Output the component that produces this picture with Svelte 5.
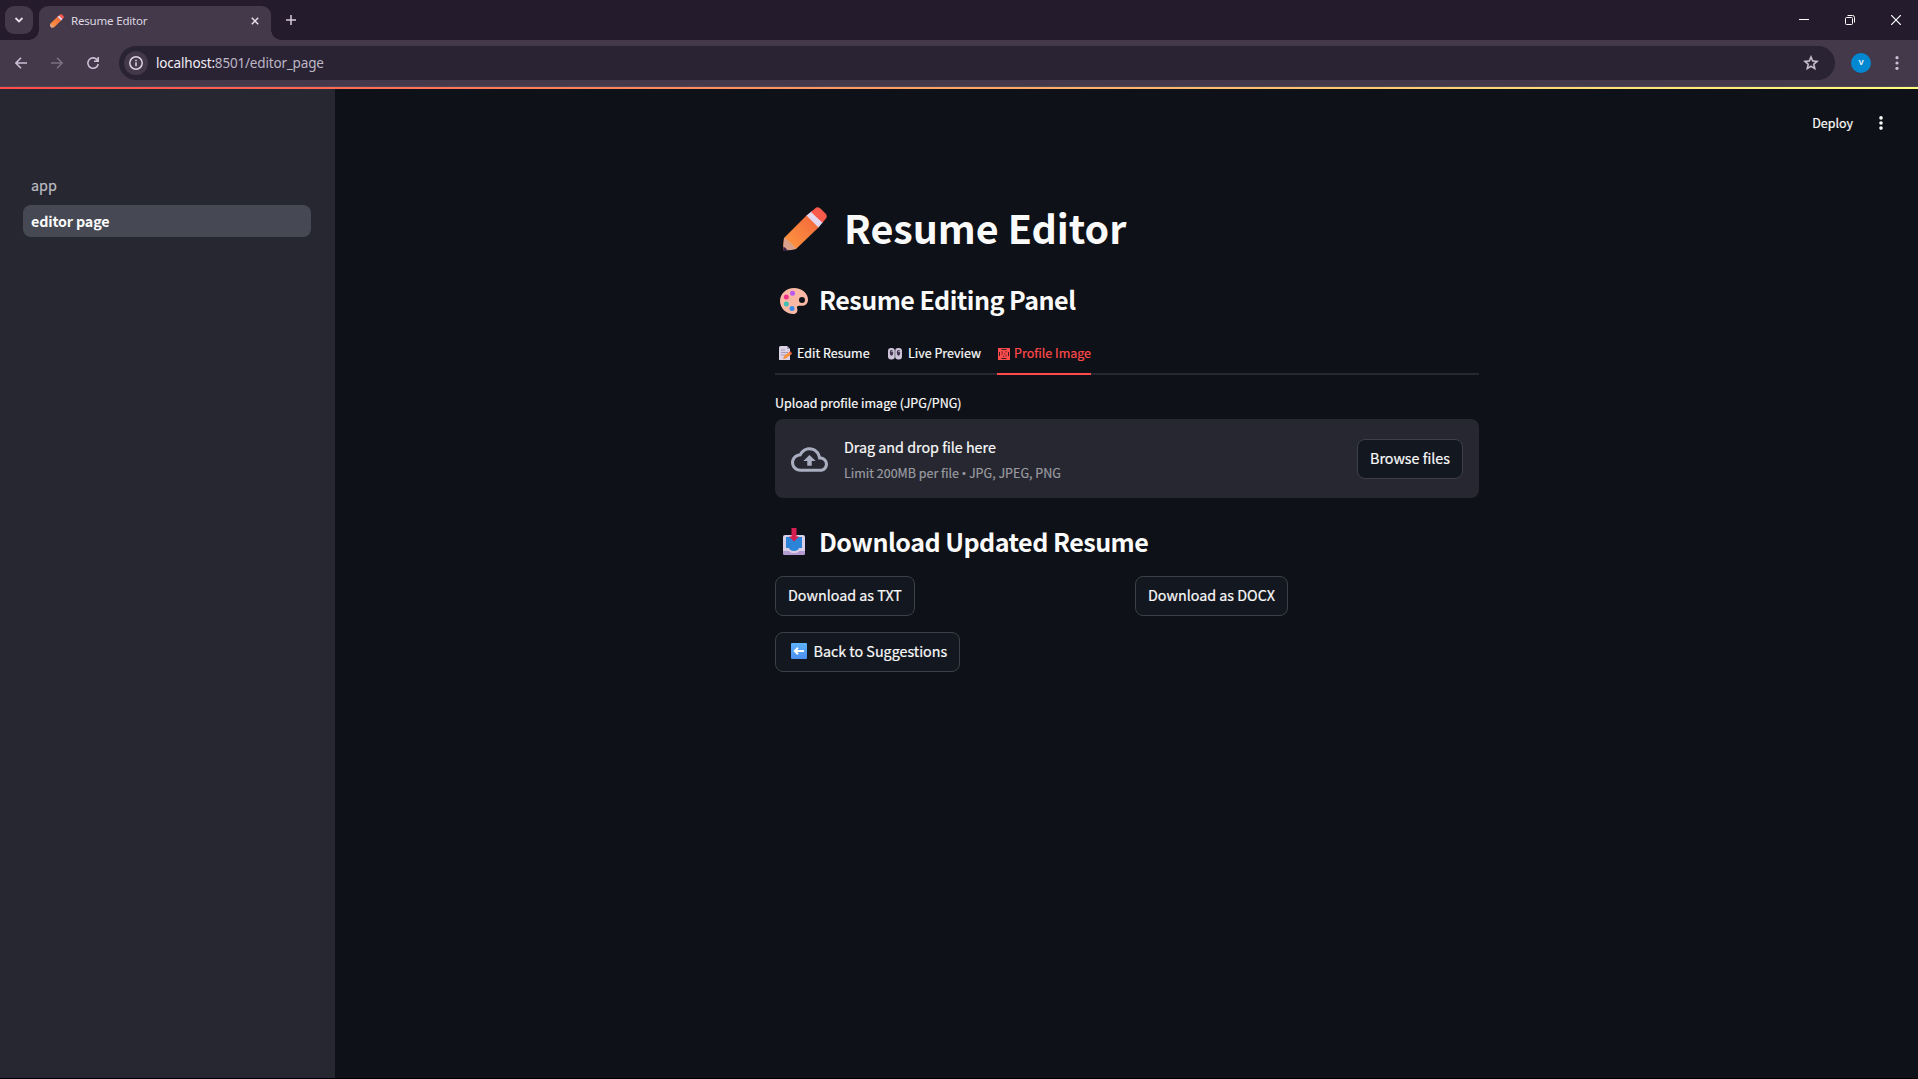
<script>
  const pages = [
    { name: 'app', active: false },
    { name: 'editor page', active: true }
  ];
</script>

{#snippet pencil(cls)}
  <svg class={cls} viewBox="0 0 44 44" aria-hidden="true">
    <defs>
      <linearGradient id="wood" x1="0" y1="1" x2="1" y2="0">
        <stop offset="0" stop-color="#ff9b42" />
        <stop offset="1" stop-color="#f2643a" />
      </linearGradient>
    </defs>
    <path d="M0 43 L1 31 L24 8 L36 20 L13 42 Z" fill="url(#wood)" />
    <path d="M0 43 L1 31 Q7 34 13 42 Q6 44 0 43 Z" fill="#d9a08c" />
    <path d="M0 44 L0.4 39.5 Q3 41 4.5 43.5 Z" fill="#3d1f45" />
    <path d="M23.5 8.5 L29 4 L40 15 L35.5 20.5 Z" fill="#e3d6ee" />
    <path d="M28 5 L32 1.5 Q35 -1 38 2 L42.500 6.500 Q45 9 42.500 12 L39.500 15.800 Z" fill="#fa5a4b" />
  </svg>
{/snippet}

<div class="window">
  <header class="tabstrip">
    <button class="tabsearch" aria-label="Search tabs">
      <svg width="10" height="6" viewBox="0 0 10 6"><path d="M1.500 1l3.500 3.500L8.500 1" fill="none" stroke="#e6dfea" stroke-width="1.800" /></svg>
    </button>
    <div class="tab">
      {@render pencil('favicon')}
      <span class="tabtitle">Resume Editor</span>
      <svg class="tabclose" viewBox="0 0 10 10"><path d="M1 1l8 8M9 1l-8 8" stroke="#e6dfea" stroke-width="1.900" /></svg>
    </div>
    <svg class="newtab" viewBox="0 0 10 10"><path d="M5 0v10M0 5h10" stroke="#d6cbdc" stroke-width="1.500" /></svg>
    <div class="winbtns">
      <svg width="10" height="10" viewBox="0 0 10 10"><path d="M0 4.500h10" stroke="#fff" stroke-width="1" /></svg>
      <svg width="10" height="10" viewBox="0 0 10 10" fill="none" stroke="#fff"><rect x=".5" y="2.500" width="7" height="7" rx="1" /><path d="M2.500 .5h5a2 2 0 0 1 2 2v5" /></svg>
      <svg width="10" height="10" viewBox="0 0 10 10"><path d="M0 0l10 10M10 0L0 10" stroke="#fff" stroke-width="1.200" /></svg>
    </div>
  </header>

  <div class="toolbar">
    <svg class="nav" viewBox="0 0 12 12" fill="none" stroke="#cdbfd6" stroke-width="1.600"><path d="M12 6H1M6 .700L.900 6 6 11.300" /></svg>
    <svg class="nav" viewBox="0 0 12 12" fill="none" stroke="#7b7083" stroke-width="1.600"><path d="M0 6h11M6 .700L11.100 6 6 11.300" /></svg>
    <svg class="nav" viewBox="0 0 12 12" fill="none" stroke="#cdbfd6" stroke-width="1.600"><path d="M10.600 3.500A5.200 5.200 0 1 0 11.200 7M11.200 0v4.200H7" /></svg>
    <div class="omnibox">
      <span class="info">
        <svg width="14" height="14" viewBox="0 0 14 14"><circle cx="7" cy="7" r="6.200" fill="none" stroke="#ded3e4" stroke-width="1.500" /><path d="M7 6.200v4M7 3.700v1.500" stroke="#ded3e4" stroke-width="1.500" /></svg>
      </span>
      <span class="url"><b>localhost:</b>8501/editor_page</span>
      <svg class="star" viewBox="0 0 24 24"><path fill="#cfc7d4" stroke="#cfc7d4" stroke-width=".5" d="M22 9.240l-7.190-.620L12 2 9.190 8.630 2 9.240l5.460 4.730L5.820 21 12 17.270 18.180 21l-1.630-7.030L22 9.240zM12 15.400l-3.760 2.270 1-4.280-3.320-2.880 4.380-.380L12 6.100l1.710 4.040 4.380.380-3.320 2.880 1 4.280L12 15.400z" /></svg>
    </div>
    <span class="avatar">V</span>
    <svg class="chromemenu" viewBox="0 0 4 14" fill="#cdbfd6"><circle cx="2" cy="1.700" r="1.600" /><circle cx="2" cy="7" r="1.600" /><circle cx="2" cy="12.300" r="1.600" /></svg>
  </div>

  <div class="decoration"></div>

  <div class="body">
    <nav class="sidebar">
      {#each pages as page}
        <a class="page" class:active={page.active} href="#{page.name}">{page.name}</a>
      {/each}
    </nav>

    <main>
      <div class="appbar">
        <span class="deploy">Deploy</span>
        <svg class="appmenu" viewBox="0 0 4 14" fill="#fafafa"><circle cx="2" cy="1.900" r="1.800" /><circle cx="2" cy="7" r="1.800" /><circle cx="2" cy="12.100" r="1.800" /></svg>
      </div>

      <div class="content">
        <h1>{@render pencil('bigpencil')}<span>Resume Editor</span></h1>

        <h3 class="panel">
          <svg class="palette" viewBox="0 0 28 26">
            <path d="M14 0C22 0 28 5.500 28 11.500c0 5-3.500 6.500-6.500 6.300H19c-1.800 0-2.300 1.200-1.800 2.700.900 3-1 5.500-3.700 5.500C6 26 0 20 0 13S6 0 14 0Z" fill="#fbb8a4" />
            <circle cx="22" cy="12" r="3" fill="#0e1117" />
            <circle cx="12.500" cy="5.200" r="2.500" fill="#b958f2" />
            <circle cx="6.300" cy="9" r="2.500" fill="#f0318c" />
            <circle cx="6.300" cy="16" r="2.500" fill="#3fc0b4" />
            <circle cx="12" cy="20.400" r="2.500" fill="#3b8df0" />
          </svg>
          <span>Resume Editing Panel</span>
        </h3>

        <div class="tabs">
          <div class="tabitem t1">
            <svg width="13" height="14" viewBox="0 0 13 14"><path d="M0 1.500Q0 0 1.500 0H8l3 3v11H0Z" fill="#dcd3e6" /><path d="M8 0l3 3H8Z" fill="#a99bb8" /><path d="M2 4h4M2 6.500h7M2 9h5" stroke="#a99cb8" /><path d="M4 13l1-3 6-4.500 2 2.200L7 12.500Z" fill="#fb923c" /><path d="M10 6.300l1.300-1 1.700 2-1.200 1.200Z" fill="#f04f45" /></svg>
            <span>Edit Resume</span>
          </div>
          <div class="tabitem t2">
            <svg width="14" height="12" viewBox="0 0 14 12"><rect width="6.800" height="11.500" rx="3" fill="#cdc4d9" /><rect x="7.200" width="6.800" height="11.500" rx="3" fill="#cdc4d9" /><ellipse cx="3.500" cy="4.800" rx="1.700" ry="2.900" fill="#43334f" /><ellipse cx="10.500" cy="4.800" rx="1.700" ry="2.900" fill="#43334f" /><circle cx="4" cy="3.600" r=".700" fill="#eee" /><circle cx="11" cy="3.600" r=".700" fill="#eee" /></svg>
            <span>Live Preview</span>
          </div>
          <div class="tabitem t3">
            <svg width="12" height="12" viewBox="0 0 12 12"><path d="M0 0h12v12H0Z" fill="#ff4b4b" /><path d="M3.500 1.500h5M3.500 10.500h5M1.500 4v4M10.500 4v4M3.500 4h1.500M7.500 3.700h1.200M3.400 6h1.200M6.500 5.800h1M5 8.300h1M7.500 7.800h1.200" stroke="#3b1a20" stroke-width="1" /></svg>
            <span>Profile Image</span>
          </div>
        </div>

        <div class="label"><span>Upload profile image (JPG/PNG)</span></div>

        <section class="dropzone">
          <svg class="cloud" viewBox="0 4 24 16"><path fill="#a9adc0" d="M19.350 10.040C18.670 6.590 15.640 4 12 4 9.110 4 6.600 5.640 5.350 8.040 2.340 8.360 0 10.910 0 14c0 3.310 2.690 6 6 6h13c2.760 0 5-2.240 5-5 0-2.640-2.050-4.780-4.650-4.960zM19 18H6c-2.210 0-4-1.790-4-4 0-2.050 1.530-3.760 3.560-3.970l1.070-.110.500-.950C8.080 7.140 9.940 6 12 6c2.620 0 4.880 1.860 5.390 4.430l.300 1.500 1.530.110c1.560.100 2.780 1.410 2.780 2.960 0 1.650-1.350 3-3 3zM8 13h2.550v3h2.900v-3H16l-4-4z" /></svg>
          <div class="droptext">
            <span class="drag">Drag and drop file here</span>
            <span class="limit">Limit 200MB per file <i>•</i> JPG, JPEG, PNG</span>
          </div>
          <button class="btn browse"><span>Browse files</span></button>
        </section>

        <h3 class="download">
          <svg class="inbox" viewBox="0 0 22 28">
            <path d="M0 9Q0 7 2 7H20Q22 7 22 9V25Q22 27 20 27H2Q0 27 0 25Z" fill="#d9cfe6" />
            <path d="M0 23H6Q7 25 11 25T16 23H22V25Q22 27 20 27H2Q0 27 0 25Z" fill="#b49ad0" />
            <path d="M3 9H19V20H16Q15 23 11 23T6 20H3Z" fill="#2b84d8" />
            <path d="M8.500 0H13.500V8.500H16L11 13.500 6 8.500H8.500Z" fill="#d51f50" />
          </svg>
          <span>Download Updated Resume</span>
        </h3>

        <div class="cols">
          <button class="btn txt"><span>Download as TXT</span></button>
          <button class="btn docx"><span>Download as DOCX</span></button>
        </div>
        <button class="btn back">
          <svg width="16" height="16" viewBox="0 0 16 16"><defs><linearGradient id="sq" x2="0" y2="1"><stop stop-color="#5eb2f8" /><stop offset="1" stop-color="#4a8ef2" /></linearGradient></defs><rect width="16" height="16" rx="1" fill="url(#sq)" /><path d="M13 8H4M7 4.800L3.800 8 7 11.200" stroke="#fff" stroke-width="2" fill="none" /></svg>
          <span>Back to Suggestions</span>
        </button>
      </div>
    </main>
  </div>
</div>

<style>
  :global(body) { margin: 0; background: #000; }
  * { box-sizing: border-box; }
  svg { display: block; flex: none; }
  button { margin: 0; padding: 0; border: 0; }
  .window { width: 1918px; height: 1079px; display: flex; flex-direction: column; overflow: hidden; border-bottom: 1px solid #000; background: #43394a; font-family: "Noto Sans CJK SC", "Noto Sans", sans-serif; color: #fafafa; white-space: nowrap; }

  .tabstrip { height: 40px; flex: none; display: flex; align-items: flex-start; background: #241b2d; font-family: "Noto Sans", sans-serif; }
  .tabsearch { width: 28px; height: 28px; margin: 6px 0 0 5px; border-radius: 9px; background: #43394a; display: flex; align-items: center; justify-content: center; }
  .tab { position: relative; width: 232px; height: 34px; margin: 6px 0 0 6px; padding: 0 12px 5px 11px; border-radius: 9px 9px 0 0; background: #43394a; display: flex; align-items: center; }
  .tab::before, .tab::after { content: ''; position: absolute; bottom: 0; width: 10px; height: 10px; }
  .tab::before { left: -10px; background: radial-gradient(circle at 0 0, transparent 9.500px, #43394a 10px); }
  .tab::after { right: -10px; background: radial-gradient(circle at 100% 0, transparent 9.500px, #43394a 10px); }
  .favicon { width: 14px; height: 14px; }
  .tabtitle { flex: 1; margin-left: 7px; font-size: 11.500px; letter-spacing: -.18px; color: #ded7e2; line-height: 16px; }
  .tabclose { width: 8px; height: 8px; }
  .newtab { width: 10px; height: 10px; margin: 15px 0 0 15px; }
  .winbtns { margin: 15px 17px 0 auto; display: flex; gap: 36px; }

  .toolbar { height: 47px; flex: none; display: flex; align-items: center; padding: 0 19px 1px 15px; background: #43394a; border-bottom: 1px solid #4e4555; }
  .nav { width: 12px; height: 12px; margin-right: 24px; }
  .omnibox { flex: 1; height: 34px; margin: 0 16px 0 -4px; padding: 0 15px 0 5px; border-radius: 17px; background: #2a2334; display: flex; align-items: center; }
  .info { width: 24px; height: 24px; border-radius: 50%; background: #43394a; display: flex; align-items: center; justify-content: center; }
  .url { flex: 1; margin-left: 8px; font-family: "Noto Sans", sans-serif; font-size: 13.500px; letter-spacing: -.18px; color: #bdb6c4; }
  .url b { font-weight: 400; color: #f1edf4; }
  .star { width: 18px; height: 18px; }
  .avatar { width: 20px; height: 20px; border-radius: 50%; background: #0288d1; font: 700 8px/20px Roboto, sans-serif; text-align: center; color: #e4f3fc; }
  .chromemenu { width: 4px; height: 14px; margin-left: 24px; }

  .decoration { height: 2px; flex: none; background: linear-gradient(90deg, #ff4b4b, #fffd80); }

  .body { flex: 1; display: flex; min-height: 0; -webkit-text-stroke: .2px currentColor; }
  .sidebar { width: 335px; flex: none; padding: 80px 24px 0 23px; background: #262730; display: flex; flex-direction: column; gap: 4px; }
  .page { height: 32px; padding: 0 8px; border-radius: 8px; font-size: 14.300px; line-height: 32px; color: #bdbec2; text-decoration: none; }
  .page.active { background: #464953; font-weight: 700; letter-spacing: -.15px; color: #fafafa; -webkit-text-stroke: 0; }

  main { flex: 1; background: #0e1117; }
  .appbar { height: 68px; padding: 0 35px 0 0; display: flex; align-items: center; justify-content: flex-end; font-size: 12.500px; }
  .deploy { margin-bottom: 2px; }
  .appmenu { width: 4px; height: 14px; margin-left: 26px; }
  .content { width: 704px; margin-left: 440px; padding-top: 46px; }
  h1, h3 { margin: 0; display: flex; -webkit-text-stroke: 0; }
  h1 { height: 53px; font-size: 39.400px; line-height: 47px; font-weight: 700; }
  .bigpencil { width: 44px; height: 44px; margin: 4px 17px 0 8px; }
  h3 { height: 34px; font-size: 25.070px; line-height: 31px; font-weight: 600; letter-spacing: -.52px; }
  .panel { margin-top: 28px; }
  .palette { width: 28px; height: 26px; margin: 4px 11px 0 5px; }
  .tabs { height: 40px; margin-top: 17px; border-bottom: 2px solid #262730; display: flex; font-size: 12.500px; line-height: 36px; }
  .tabitem { height: 40px; display: flex; }
  .t1 { width: 113px; padding-left: 4px; }
  .t2 { width: 109px; }
  .t3 { width: 94px; padding-left: 1px; border-bottom: 2px solid #ff4b4b; color: #ff4b4b; }
  .t1 svg { margin: 11px 5px 0 0; }
  .t2 svg { margin: 13px 6px 0 0; }
  .t3 svg { margin: 13px 4px 0 0; }
  .label { height: 24px; margin-top: 16px; font-size: 12.500px; line-height: 24px; }
  .dropzone { height: 79px; margin-top: 4px; padding: 0 16px; border-radius: 8px; background: #262730; display: flex; align-items: center; }
  .cloud { width: 37px; height: 25px; margin-top: 2px; }
  .droptext { flex: 1; margin: 2px 0 0 16px; display: flex; flex-direction: column; }
  .drag { font-size: 14.300px; line-height: 25px; }
  .limit { font-size: 12.500px; line-height: 27px; color: #9a9ba0; }
  .limit i { font: normal 13px "Open Sans", sans-serif; margin: 0 -.3px; }
  .btn { height: 40px; padding: 0 0 3px 12px; border: 1px solid #3d4046; border-radius: 8px; background: #131720; display: flex; align-items: center; font-family: inherit; font-size: 14.300px; color: #fafafa; white-space: nowrap; -webkit-text-stroke: .2px currentColor; }
  .browse { width: 106px; }
  .download { margin-top: 28px; }
  .inbox { width: 22px; height: 28px; margin: 2px 14px 0 8px; }
  .cols { margin-top: 16px; display: grid; grid-template-columns: 360px 1fr; }
  .txt { width: 140px; }
  .docx { width: 153px; }
  .back { width: 185px; margin-top: 16px; padding-left: 15px; gap: 6.500px; }
</style>
